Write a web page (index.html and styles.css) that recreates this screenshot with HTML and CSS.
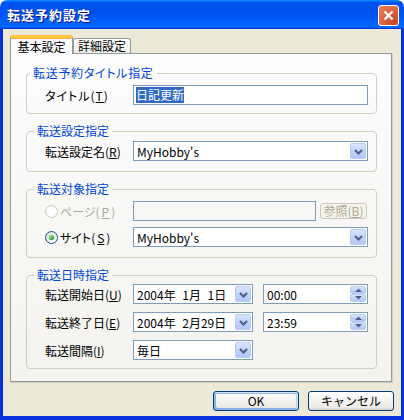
FILE: index.html
```html
<!DOCTYPE html>
<html lang="ja">
  <head>
    <meta charset="UTF-8" />
    <meta name="viewport" content="width=device-width, initial-scale=1.0" />
    <title>転送予約設定</title>
    <link rel="stylesheet" href="styles.css">
  </head>
  <body>
    <div class="window">
      <!-- タイトルバー -->
      <div class="titlebar">
        <span class="title">転送予約設定</span>
        <button type="button" class="close">
          <svg width="11" height="11" viewBox="0 0 11 11">
            <path d="M1.5 1.5l8 8M9.5 1.5l-8 8" stroke="#fff" stroke-width="2.4" fill="none" />
          </svg>
        </button>
      </div>

      <div class="frame">
        <!-- タブ -->
        <div class="tabs">
          <div class="tab active">基本設定</div>
          <div class="tab">詳細設定</div>
        </div>

        <div class="panel">
          <!-- 転送予約タイトル指定 -->
          <fieldset class="group g-title">
            <legend>転送予約タイトル指定</legend>
            <div class="row">
              <label class="label">タイトル(<u>T</u>)</label>
              <div class="edit wide"><span class="selected">日記更新</span></div>
            </div>
          </fieldset>

          <!-- 転送設定指定 -->
          <fieldset class="group g-conf">
            <legend>転送設定指定</legend>
            <div class="row">
              <label class="label">転送設定名(<u>R</u>)</label>
              <div class="edit combo wide">
                <span class="value">MyHobby's</span>
                <span class="drop">
                  <svg width="9" height="6" viewBox="0 0 9 6"><path d="M1 1l3.5 3.5L8 1" stroke="#4d6185" stroke-width="2" fill="none" /></svg>
                </span>
              </div>
            </div>
          </fieldset>

          <!-- 転送対象指定 -->
          <fieldset class="group g-target">
            <legend>転送対象指定</legend>
            <div class="row">
              <label class="label radio-label disabled"><span class="radio"></span>ページ(<u>P</u>)</label>
              <div class="edit off"></div>
              <button type="button" class="browse" disabled>参照(<u>B</u>)</button>
            </div>
            <div class="row">
              <label class="label radio-label"><span class="radio checked"></span>サイト(<u>S</u>)</label>
              <div class="edit combo wide">
                <span class="value">MyHobby's</span>
                <span class="drop">
                  <svg width="9" height="6" viewBox="0 0 9 6"><path d="M1 1l3.5 3.5L8 1" stroke="#4d6185" stroke-width="2" fill="none" /></svg>
                </span>
              </div>
            </div>
          </fieldset>

          <!-- 転送日時指定 -->
          <fieldset class="group g-date">
            <legend>転送日時指定</legend>
            <div class="row">
              <label class="label">転送開始日(<u>U</u>)</label>
              <div class="edit combo date">
                <span class="value">2004年&#8199;1月&#8199;1日</span>
                <span class="drop">
                  <svg width="9" height="6" viewBox="0 0 9 6"><path d="M1 1l3.5 3.5L8 1" stroke="#4d6185" stroke-width="2" fill="none" /></svg>
                </span>
              </div>
              <div class="edit combo time">
                <span class="value">00:00</span>
                <span class="spin">
                  <span class="spin-btn"><svg width="7" height="4" viewBox="0 0 7 4"><path d="M0 4L3.5 0.5 7 4z" fill="#4d6185" /></svg></span>
                  <span class="spin-btn"><svg width="7" height="4" viewBox="0 0 7 4"><path d="M0 0L3.5 3.5 7 0z" fill="#4d6185" /></svg></span>
                </span>
              </div>
            </div>
            <div class="row">
              <label class="label">転送終了日(<u>E</u>)</label>
              <div class="edit combo date">
                <span class="value">2004年&#8199;2月29日</span>
                <span class="drop">
                  <svg width="9" height="6" viewBox="0 0 9 6"><path d="M1 1l3.5 3.5L8 1" stroke="#4d6185" stroke-width="2" fill="none" /></svg>
                </span>
              </div>
              <div class="edit combo time">
                <span class="value">23:59</span>
                <span class="spin">
                  <span class="spin-btn"><svg width="7" height="4" viewBox="0 0 7 4"><path d="M0 4L3.5 0.5 7 4z" fill="#4d6185" /></svg></span>
                  <span class="spin-btn"><svg width="7" height="4" viewBox="0 0 7 4"><path d="M0 0L3.5 3.5 7 0z" fill="#4d6185" /></svg></span>
                </span>
              </div>
            </div>
            <div class="row">
              <label class="label">転送間隔(<u>I</u>)</label>
              <div class="edit combo date">
                <span class="value">毎日</span>
                <span class="drop">
                  <svg width="9" height="6" viewBox="0 0 9 6"><path d="M1 1l3.5 3.5L8 1" stroke="#4d6185" stroke-width="2" fill="none" /></svg>
                </span>
              </div>
            </div>
          </fieldset>
        </div>

        <!-- OK / キャンセル -->
        <div class="footer">
          <button type="button" class="btn default">OK</button>
          <button type="button" class="btn">キャンセル</button>
        </div>
      </div>
    </div>
  </body>
</html>
```

FILE: styles.css
```css
* {
  box-sizing: border-box;
}

body {
  margin: 0;
  background: #fff;
  font-family: "Noto Sans CJK JP", sans-serif;
  font-size: 12px;
  color: #000;
}

.window {
  width: 404px;
  height: 420px;
  display: flex;
  flex-direction: column;
}

/* タイトルバー */
.titlebar {
  height: 29px;
  flex: none;
  display: flex;
  justify-content: space-between;
  align-items: flex-start;
  padding: 5px 5px 0 7px;
  border-radius: 7px 7px 0 0;
  background: linear-gradient(180deg, #0997ff, #0053ee 8%, #0050ee 40%, #06f 88%, #06f 93%, #005bff 95%, #003dd7 96%, #003dd7);
}

.title {
  color: #fff;
  font-weight: bold;
  font-size: 13px;
  letter-spacing: 1px;
  line-height: 20px;
  text-shadow: 1px 1px #0f1089;
}

.close {
  width: 21px;
  height: 21px;
  padding: 0;
  border: 1px solid #fff;
  border-radius: 3px;
  background: radial-gradient(circle at 85% 85%, #cc4622 0, #d85a36 40%, #e8866a 100%);
  display: flex;
  justify-content: center;
  align-items: center;
}

.frame {
  flex: 1;
  display: flex;
  flex-direction: column;
  background: #ece9d8;
  border: solid #0831d9;
  border-width: 0 3px 4px 3px;
  padding: 6px 0 0 7px;
}

/* タブ */
.tabs {
  display: flex;
  align-items: flex-end;
  height: 18px;
  position: relative;
  z-index: 1;
}

.tab {
  height: 15px;
  padding: 0 4px;
  line-height: 14px;
  border: 1px solid #919b9c;
  border-bottom: none;
  border-radius: 3px 3px 0 0;
  background: linear-gradient(180deg, #fff, #fafaf9 26%, #f0f0ea 95%, #ecebe5);
}

.tab.active {
  width: 63px;
  height: 19px;
  margin-bottom: -1px;
  text-align: center;
  line-height: 17px;
  border-top: 3px solid #ffc83c;
  box-shadow: inset 0 1px #f8b048;
  background: #fcfcfe;
}

.panel {
  width: 382px;
  height: 329px;
  border: 1px solid #919b9c;
  box-shadow: 1px 1px #d0cebf;
  background: linear-gradient(180deg, #fcfcfe, #f4f3ee);
  padding: 12px 14px 0 15px;
}

/* グループ枠 */
.group {
  margin: 0 0 10px;
  padding: 0 8px 8px 18px;
  border: 1px solid #d0d0bf;
  border-radius: 4px;
  min-inline-size: 0;
}

.group legend {
  margin-left: -11px;
  padding: 0 3px;
  line-height: 14px;
  color: #0046d5;
  font-feature-settings: "palt";
}

.g-title {
  padding-top: 5px;
}

.g-title legend {
  margin-left: -15px;
  letter-spacing: 0.7px;
}

.g-title .label {
  letter-spacing: 1px;
}

.g-conf {
  padding-top: 3px;
  padding-bottom: 10px;
}

.g-target {
  padding-top: 5px;
  padding-bottom: 10px;
}

.g-date {
  padding-top: 2px;
}

.row {
  display: flex;
  align-items: center;
  gap: 4px;
}

.g-target .row + .row {
  margin-top: 6px;
}

.g-date .row {
  gap: 10px;
}

.g-date .row + .row {
  margin-top: 8px;
}

.label {
  width: 88px;
  margin-right: -4px;
  flex: none;
  font-feature-settings: "palt";
  white-space: nowrap;
}

.g-date .label {
  margin-right: -10px;
}

.radio-label {
  display: flex;
  align-items: center;
  gap: 2px;
}

.disabled {
  color: #aca899;
}

.radio {
  width: 13px;
  height: 13px;
  border-radius: 50%;
  border: 1px solid #1c5180;
  background: linear-gradient(135deg, #dcdcd7, #fff);
  display: flex;
  justify-content: center;
  align-items: center;
}

.disabled .radio {
  border-color: #cac8bb;
  background: #fff;
}

.radio.checked::after {
  content: "";
  width: 5px;
  height: 5px;
  border-radius: 50%;
  background: radial-gradient(circle at 35% 35%, #a8f0a4, #21a121 60%, #159a15);
}

/* テキスト入力 */
.edit {
  height: 20px;
  border: 1px solid #7f9db9;
  background: #fff;
  display: flex;
  align-items: center;
  padding-left: 1px;
  white-space: pre;
}

.wide {
  width: 235px;
}

.edit.off {
  width: 183px;
  background: transparent;
}

.date {
  width: 120px;
}

.time {
  width: 105px;
}

.selected {
  margin-left: 1px;
  background: #316ac5;
  color: #fff;
  line-height: 16px;
}

.combo .value {
  padding-left: 2px;
  font-variant-numeric: tabular-nums;
}

.drop,
.spin {
  margin-left: auto;
  margin-right: 1px;
  width: 16px;
  height: 16px;
  display: flex;
  flex-direction: column;
}

.drop {
  justify-content: center;
  align-items: center;
  border: 1px solid #b9caf3;
  border-radius: 2px;
  background: linear-gradient(180deg, #dce6fd, #c1d3fb 50%, #b4c8f9);
}

.drop svg {
  margin-top: 1px;
}

.spin-btn {
  flex: 1;
  display: flex;
  justify-content: center;
  align-items: center;
  border: 1px solid #b9caf3;
  border-radius: 2px;
  background: linear-gradient(180deg, #dce6fd, #c1d3fb 50%, #b4c8f9);
}

/* 参照ボタン */
.browse {
  width: 47px;
  height: 16px;
  padding: 0;
  border: 1px solid #c9c7ba;
  border-radius: 3px;
  background: #f5f4ea;
  color: #aca899;
  font: inherit;
  line-height: 14px;
}

/* 下部ボタン */
.footer {
  display: flex;
  justify-content: flex-end;
  gap: 9px;
  padding: 9px 7px 0 0;
}

.btn {
  width: 86px;
  height: 20px;
  padding: 0;
  border: 1px solid #003c74;
  border-radius: 3px;
  background: linear-gradient(180deg, #fff, #ecebe6 86%, #d6d0c5);
  font: inherit;
  line-height: 18px;
  color: #000;
}

.btn.default {
  box-shadow: inset -1px 1px #cee7ff, inset 1px 2px #98b8ea, inset -2px 2px #bcd4f6, inset 1px -1px #89ade4, inset 2px -2px #89ade4;
}
```
